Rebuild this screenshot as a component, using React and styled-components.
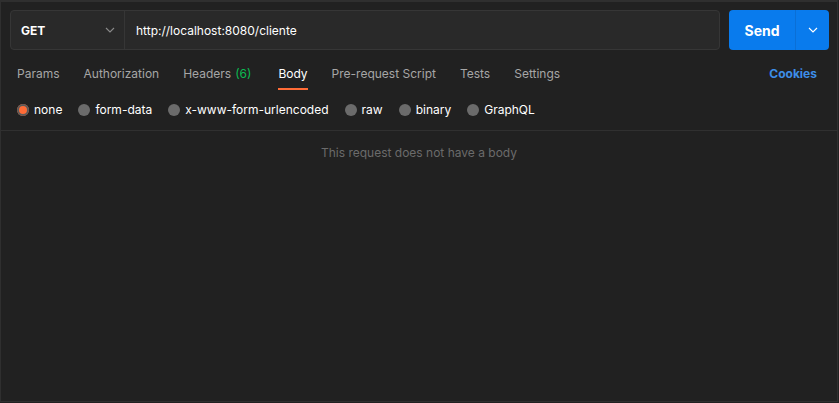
import styled, { createGlobalStyle } from 'styled-components';

const GlobalStyle = createGlobalStyle`
  * { box-sizing: border-box; }
  html, body {
    margin: 0;
    padding: 0;
    background: #212121;
    font-family: Inter, "Noto Sans", sans-serif;
  }
`;

const tabs = [
  { label: 'Params' },
  { label: 'Authorization' },
  { label: 'Headers', count: '(6)' },
  { label: 'Body', active: true },
  { label: 'Pre-request Script' },
  { label: 'Tests' },
  { label: 'Settings' },
];

const bodyTypes = ['none', 'form-data', 'x-www-form-urlencoded', 'raw', 'binary', 'GraphQL'];

function Chevron({ color }) {
  return (
    <svg width="10" height="6" viewBox="0 0 10 6" fill="none">
      <path d="M1 1l4 4 4-4" stroke={color} strokeWidth="1.1" />
    </svg>
  );
}

export default function App() {
  return (
    <>
      <GlobalStyle />
      <Frame>
        <UrlBar>
          <RequestBox>
            <MethodSelect>
              <Method>GET</Method>
              <Chevron color="#8a8a8a" />
            </MethodSelect>
            <UrlInput>http://localhost:8080/cliente</UrlInput>
          </RequestBox>
          <SendButton>
            <SendLabel>Send</SendLabel>
            <SendArrow>
              <Chevron color="#ffffff" />
            </SendArrow>
          </SendButton>
        </UrlBar>

        <TabRow>
          <Tabs>
            {tabs.map((t) => (
              <Tab key={t.label} $active={t.active}>
                {t.label}
                {t.count && <Count>{t.count}</Count>}
              </Tab>
            ))}
          </Tabs>
          <Cookies>Cookies</Cookies>
        </TabRow>

        <RadioRow>
          {bodyTypes.map((b, i) => (
            <RadioItem key={b}>
              <Radio $checked={i === 0} />
              {b}
            </RadioItem>
          ))}
        </RadioRow>

        <EmptyBody>This request does not have a body</EmptyBody>
      </Frame>
    </>
  );
}

const Frame = styled.div`
  width: 838px;
  height: 402px;
  border: 1px solid #2f2f2f;
  border-top-width: 2px;
  background: #212121;
  display: flex;
  flex-direction: column;
`;

const UrlBar = styled.div`
  display: flex;
  gap: 9px;
  padding: 8px 8px 0 9px;
`;

const RequestBox = styled.div`
  flex: 1;
  height: 40px;
  display: flex;
  border: 1px solid #363636;
  border-radius: 4px;
  background: #292929;
`;

const MethodSelect = styled.div`
  width: 114px;
  display: flex;
  align-items: center;
  justify-content: space-between;
  padding: 0 9px 0 10px;
  border-right: 1px solid #363636;
`;

const Method = styled.span`
  color: #ffffff;
  font-size: 12px;
  font-weight: 700;
`;

const UrlInput = styled.div`
  display: flex;
  align-items: center;
  padding-left: 11px;
  color: #ffffff;
  font-size: 12px;
`;

const SendButton = styled.div`
  width: 100px;
  height: 40px;
  display: flex;
  border-radius: 4px;
  background: #097bed;
  overflow: hidden;
`;

const SendLabel = styled.div`
  width: 67px;
  display: flex;
  align-items: center;
  justify-content: center;
  color: #ffffff;
  font-size: 14px;
  font-weight: 700;
  border-right: 1px solid #0a6fd6;
`;

const SendArrow = styled.div`
  flex: 1;
  display: flex;
  align-items: center;
  justify-content: center;
`;

const TabRow = styled.div`
  display: flex;
  align-items: flex-start;
  justify-content: space-between;
  padding: 0 20px 0 16px;
  margin-top: 15px;
`;

const Tabs = styled.div`
  display: flex;
  gap: 24px;
`;

const Tab = styled.div`
  color: ${(p) => (p.$active ? '#ffffff' : '#a6a6a6')};
  font-size: 12px;
  line-height: 17px;
  padding-bottom: 6px;
  border-bottom: 2px solid ${(p) => (p.$active ? '#ff6c37' : 'transparent')};
`;

const Count = styled.span`
  color: #0cbb52;
  margin: 0 3px 0 4px;
`;

const Cookies = styled.div`
  color: #3d8ee8;
  font-size: 12px;
  font-weight: 700;
  line-height: 17px;
`;

const RadioRow = styled.div`
  display: flex;
  align-items: center;
  gap: 16px;
  padding: 11px 16px;
  border-bottom: 1px solid #303030;
`;

const RadioItem = styled.label`
  display: flex;
  align-items: center;
  gap: 5px;
  color: #ffffff;
  font-size: 12px;
  line-height: 18px;
`;

const Radio = styled.span`
  width: 12px;
  height: 12px;
  border-radius: 50%;
  background: ${(p) => (p.$checked ? '#ff6c37' : '#6b6b6b')};
  box-shadow: ${(p) => (p.$checked ? 'inset 0 0 0 2px #5a5a5a' : 'none')};
`;

const EmptyBody = styled.div`
  text-align: center;
  color: #6b6b6b;
  font-size: 12px;
  padding-top: 14px;
`;
